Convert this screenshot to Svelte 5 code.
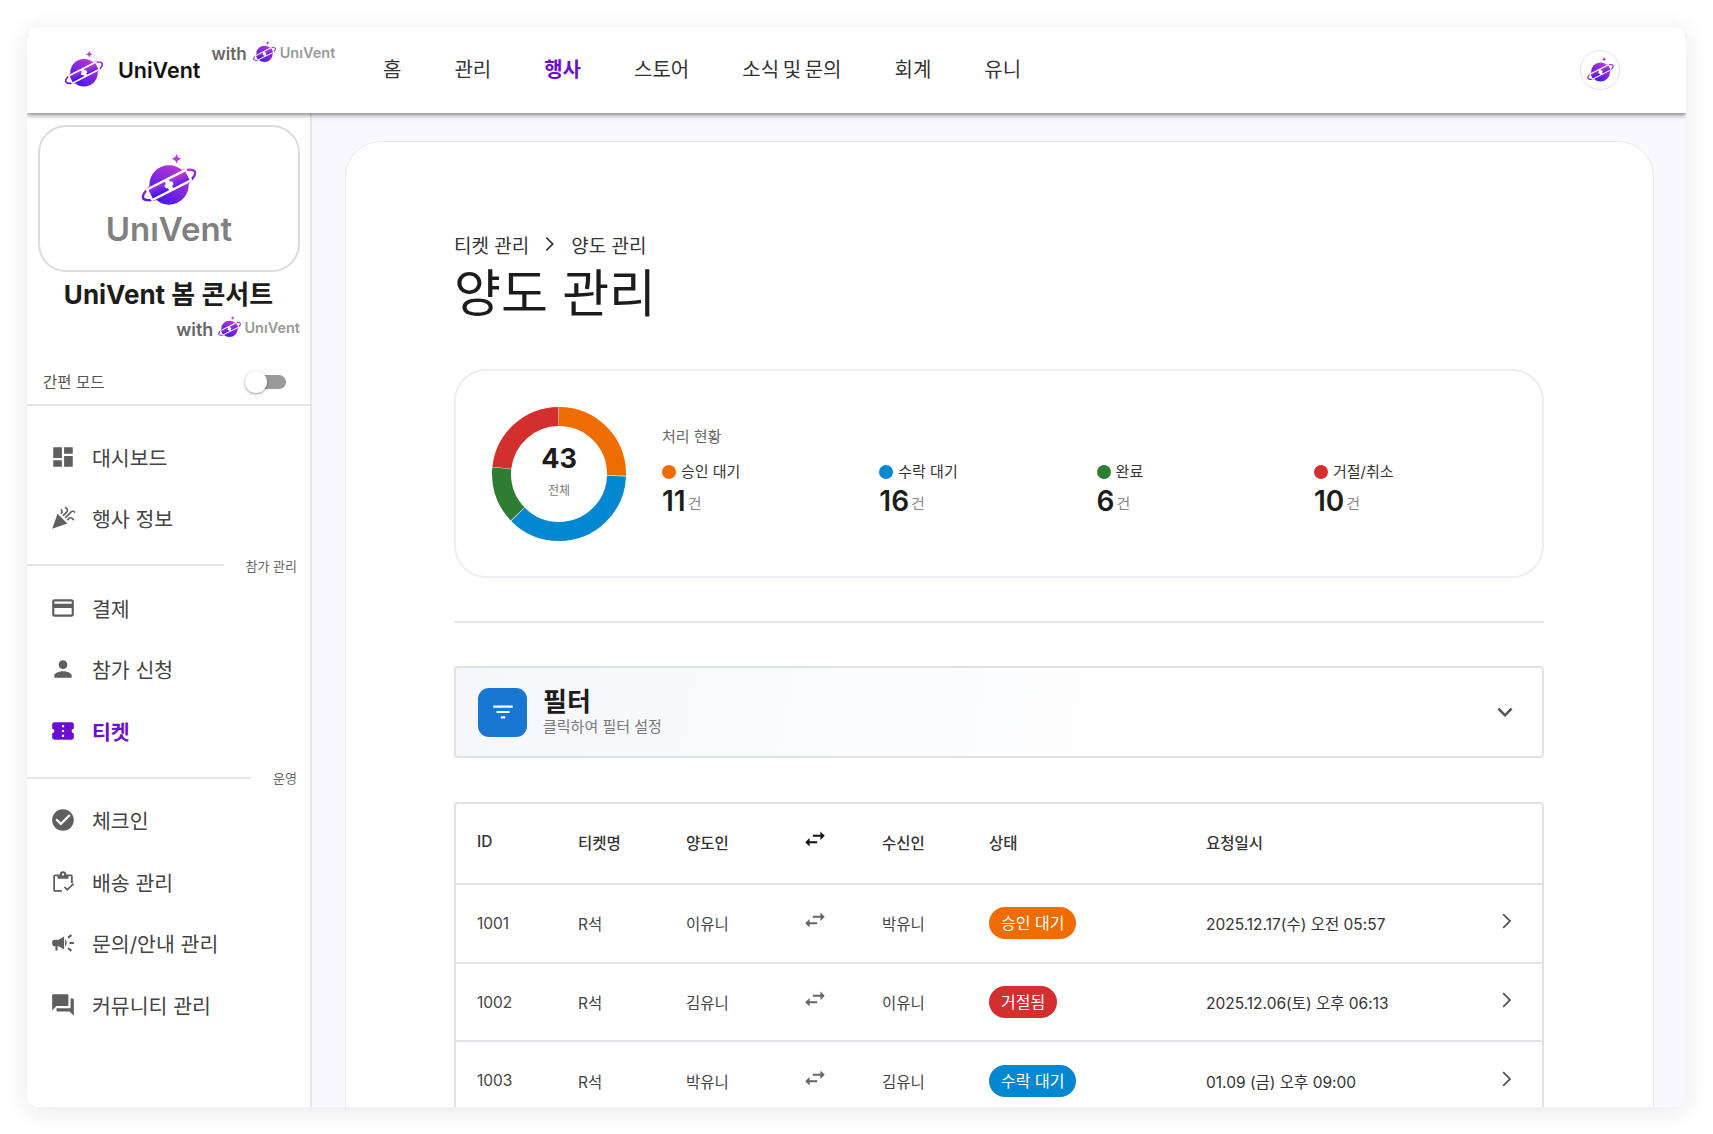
<script>
  const nav = ['홈', '관리', '행사', '스토어', '소식 및 문의', '회계', '유니'];

  const icons = {
    dashboard: 'M3 13h8V3H3v10zm0 8h8v-6H3v6zm10 0h8V11h-8v10zm0-18v6h8V3h-8z',
    celebration: 'M2 22l14-5-9-9zM14.53 12.53l5.59-5.59c.49-.49 1.28-.49 1.77 0l.59.59 1.06-1.06-.59-.59c-1.07-1.07-2.82-1.07-3.89 0l-5.59 5.59 1.06 1.06zM10.06 6.88l-.59.59 1.06 1.06.59-.59c1.07-1.07 1.07-2.82 0-3.89l-.59-.59-1.06 1.07.59.59c.48.48.48 1.28 0 1.76zM17.06 11.88l-1.59 1.59 1.06 1.06 1.59-1.59c.49-.49 1.28-.49 1.77 0l1.61 1.61 1.06-1.06-1.61-1.61c-1.08-1.07-2.82-1.07-3.89 0zM15.06 5.88l-3.59 3.59 1.06 1.06 3.59-3.59c1.07-1.07 1.07-2.82 0-3.89l-1.59-1.59-1.06 1.06 1.59 1.59c.48.49.48 1.29 0 1.77z',
    card: 'M20 4H4c-1.11 0-1.99.89-1.99 2L2 18c0 1.11.89 2 2 2h16c1.11 0 2-.89 2-2V6c0-1.11-.89-2-2-2zm0 14H4v-6h16v6zm0-10H4V6h16v2z',
    person: 'M12 12c2.21 0 4-1.79 4-4s-1.79-4-4-4-4 1.79-4 4 1.79 4 4 4zm0 2c-2.67 0-8 1.34-8 4v2h16v-2c0-2.66-5.33-4-8-4z',
    ticket: 'M22 10V6c0-1.11-.9-2-2-2H4c-1.1 0-1.99.89-1.99 2v4c1.1 0 1.99.9 1.99 2s-.89 2-2 2v4c0 1.1.9 2 2 2h16c1.1 0 2-.9 2-2v-4c-1.1 0-2-.9-2-2s.9-2 2-2zm-9 7.5h-2v-2h2v2zm0-4.5h-2v-2h2v2zm0-4.5h-2v-2h2v2z',
    check: 'M12 2C6.48 2 2 6.48 2 12s4.48 10 10 10 10-4.48 10-10S17.52 2 12 2zm-2 15l-5-5 1.41-1.41L10 14.17l7.59-7.59L19 8l-9 9z',
    delivery: 'M4.5 5H9a3 3 0 0 1 6 0h4.5c.8 0 1.5.7 1.5 1.5V13h-1.6V6.6H17V9H7V6.6H4.6v12.8H11V21H4.5c-.8 0-1.5-.7-1.5-1.5v-13C3 5.700 3.700 5 4.500 5zM12 3.900a1.100 1.100 0 1 0 0 2.200 1.100 1.100 0 0 0 0-2.200zM16 20.300l-3.300-3.300 1.100-1.100 2.200 2.200 5.200-5.200 1.100 1.100z',
    campaign: 'M18 11v2h4v-2h-4zm-2 6.61c.96.71 2.21 1.65 3.2 2.39.4-.53.8-1.07 1.2-1.6-.99-.74-2.24-1.68-3.2-2.4-.4.54-.8 1.08-1.2 1.61zM20.4 5.6c-.4-.53-.8-1.07-1.2-1.6-.99.74-2.24 1.68-3.2 2.4.4.53.8 1.07 1.2 1.6.96-.72 2.21-1.65 3.2-2.4zM4 9c-1.1 0-2 .9-2 2v2c0 1.1.9 2 2 2h1v4h2v-4h1l5 3V6L8 9H4zm11.5 3c0-1.33-.58-2.53-1.5-3.35v6.69c.92-.81 1.5-2.01 1.5-3.34z',
    forum: 'M21 6h-2v9H6v2c0 .55.45 1 1 1h11l4 4V7c0-.55-.45-1-1-1zm-4 6V3c0-.55-.45-1-1-1H3c-.55 0-1 .45-1 1v14l4-4h10c.55 0 1-.45 1-1z',
    swap: 'M6.99 11L3 15l3.99 4v-3H14v-2H6.99v-3zM21 9l-3.99-4v3H10v2h7.01v3L21 9z',
    filter: 'M10 18h4v-2h-4v2zM3 6v2h18V6H3zm3 7h12v-2H6v2z',
    down: 'M16.59 8.59L12 13.17 7.41 8.59 6 10l6 6 6-6z',
    right: 'M9.4 6l-1 1 5 5-5 5 1 1 6-6z'
  };

  const menu = [
    { items: [
      { label: '대시보드', icon: 'dashboard' },
      { label: '행사 정보', icon: 'celebration' }
    ] },
    { title: '참가 관리', items: [
      { label: '결제', icon: 'card' },
      { label: '참가 신청', icon: 'person' },
      { label: '티켓', icon: 'ticket', active: true }
    ] },
    { title: '운영', items: [
      { label: '체크인', icon: 'check' },
      { label: '배송 관리', icon: 'delivery' },
      { label: '문의/안내 관리', icon: 'campaign' },
      { label: '커뮤니티 관리', icon: 'forum' }
    ] }
  ];

  const stats = [
    { label: '승인 대기', value: 11, color: '#ef6c00' },
    { label: '수락 대기', value: 16, color: '#0288d1' },
    { label: '완료', value: 6, color: '#2e7d32' },
    { label: '거절/취소', value: 10, color: '#d32f2f' }
  ];
  const total = stats.reduce((sum, s) => sum + s.value, 0);
  const segments = stats.map((s, i) => ({
    ...s,
    offset: -stats.slice(0, i).reduce((sum, p) => sum + p.value, 0)
  }));

  const rows = [
    { id: 1001, ticket: 'R석', from: '이유니', to: '박유니', status: '승인 대기', tone: 'orange', date: '2025.12.17(수) 오전 05:57' },
    { id: 1002, ticket: 'R석', from: '김유니', to: '이유니', status: '거절됨', tone: 'red', date: '2025.12.06(토) 오후 06:13' },
    { id: 1003, ticket: 'R석', from: '박유니', to: '김유니', status: '수락 대기', tone: 'blue', date: '01.09 (금) 오후 09:00' }
  ];
</script>

{#snippet icon(name, size = 24)}
  <svg class="icon" width={size} height={size} viewBox="0 0 24 24" fill="currentColor"><path d={icons[name]} /></svg>
{/snippet}

{#snippet planet(width)}
  <svg class="planet" {width} viewBox="0 0 64 58">
    <defs>
      <linearGradient id="planet-fill" x1="0.85" y1="0" x2="0.25" y2="1">
        <stop offset="0" stop-color="#c03ad6" />
        <stop offset="1" stop-color="#4315e6" />
      </linearGradient>
    </defs>
    <path d="M40 0l1.600 3.400L45 5l-3.400 1.600L40 10l-1.600-3.400L35 5l3.400-1.600z" fill="#b93be0" />
    <ellipse cx="32" cy="33" rx="31" ry="9" transform="rotate(-27 32 33)" fill="none" stroke="url(#planet-fill)" stroke-width="2.600" />
    <circle cx="32" cy="33" r="21" fill="url(#planet-fill)" />
    <g transform="rotate(-27 32 33)">
      <rect x="7.500" y="25.500" width="49" height="15" rx="2" fill="#fff" />
      <path d="M10 28h19.500v2.500a2.500 2.500 0 0 0 0 5V38H10zM34.500 28H54v10H34.500v-2.500a2.500 2.500 0 0 0 0-5z" fill="url(#planet-fill)" />
    </g>
  </svg>
{/snippet}

{#snippet withBrand()}
  <span class="with">with</span>
  {@render planet(25)}
  <span class="with-name">UnıVent</span>
{/snippet}

<div class="window">
  <header class="topbar">
    <div class="brand">
      {@render planet(42)}
      <span class="brand-name">UniVent</span>
      <div class="brand-with">{@render withBrand()}</div>
    </div>
    <nav>
      {#each nav as item}
        <span class:current={item === '행사'}>{item}</span>
      {/each}
    </nav>
    <div class="avatar">{@render planet(29)}</div>
  </header>

  <div class="body">
    <aside>
      <div class="logo-box">
        {@render planet(60)}
        <span class="logo-name">UnıVent</span>
      </div>
      <div class="event-name">UniVent 봄 콘서트</div>
      <div class="event-with">{@render withBrand()}</div>
      <div class="simple-mode">
        <span>간편 모드</span>
        <div class="switch"><i></i></div>
      </div>
      <div class="menu">
        {#each menu as group}
          {#if group.title}
            <div class="group-title"><hr /><span>{group.title}</span></div>
          {/if}
          {#each group.items as item}
            <div class="menu-item" class:active={item.active}>
              {@render icon(item.icon, 26)}
              <span>{item.label}</span>
            </div>
          {/each}
        {/each}
      </div>
    </aside>

    <main>
      <section class="sheet">
        <div class="crumbs">
          <span>티켓 관리</span>
          {@render icon('right', 28)}
          <span>양도 관리</span>
        </div>
        <h1>양도 관리</h1>

        <div class="stat-card">
          <div class="donut">
            <svg width="136" height="136" viewBox="0 0 136 136">
              <g transform="rotate(-90 68 68)">
                {#each segments as s}
                  <circle cx="68" cy="68" r="57.5" fill="none" stroke={s.color} stroke-width="19"
                    pathLength={total} stroke-dasharray="{s.value - 0.06} {total - s.value + 0.06}" stroke-dashoffset={s.offset} />
                {/each}
              </g>
            </svg>
            <div class="donut-label">
              <strong>{total}</strong>
              <span>전체</span>
            </div>
          </div>
          <div class="legend">
            <div class="legend-title">처리 현황</div>
            <div class="legend-grid">
              {#each stats as s}
                <div>
                  <div class="legend-label"><i style="background: {s.color}"></i>{s.label}</div>
                  <div class="legend-value">{s.value}<small>건</small></div>
                </div>
              {/each}
            </div>
          </div>
        </div>

        <hr class="rule" />

        <div class="filter">
          <div class="filter-icon">{@render icon('filter', 26)}</div>
          <div class="filter-text">
            <strong>필터</strong>
            <span>클릭하여 필터 설정</span>
          </div>
          <div class="filter-toggle">{@render icon('down', 30)}</div>
        </div>

        <div class="table-wrap">
          <table>
            <thead>
              <tr>
                <th class="c-id">ID</th>
                <th class="c-ticket">티켓명</th>
                <th class="c-from">양도인</th>
                <th class="c-swap"><span class="swap head">{@render icon('swap', 26)}</span></th>
                <th class="c-to">수신인</th>
                <th class="c-status">상태</th>
                <th class="c-date">요청일시</th>
                <th></th>
              </tr>
            </thead>
            <tbody>
              {#each rows as row}
                <tr>
                  <td>{row.id}</td>
                  <td>{row.ticket}</td>
                  <td>{row.from}</td>
                  <td><span class="swap">{@render icon('swap', 26)}</span></td>
                  <td>{row.to}</td>
                  <td><span class="chip {row.tone}">{row.status}</span></td>
                  <td class="date">{row.date}</td>
                  <td class="more">{@render icon('right', 30)}</td>
                </tr>
              {/each}
            </tbody>
          </table>
        </div>
      </section>
    </main>
  </div>
</div>

<style>
  :global(body) {
    background: #fff;
    color: #222;
    font-family: Inter, "Noto Sans CJK KR", sans-serif;
  }

  .window {
    margin: 27px;
    height: 1080px;
    display: flex;
    flex-direction: column;
    overflow: hidden;
    background: #fff;
    border-radius: 12px;
    box-shadow: 0 4px 24px rgba(30, 30, 60, 0.1);
  }

  .icon, .planet {
    display: block;
    flex: none;
  }

  .topbar {
    position: relative;
    z-index: 2;
    flex: none;
    height: 86px;
    display: flex;
    align-items: center;
    padding: 0 66px 0 36px;
    background: #fff;
    box-shadow: 0 2px 5px rgba(0, 0, 0, 0.5);
  }

  .brand {
    display: flex;
    align-items: center;
    width: 320px;
    flex: none;
  }

  .brand-name {
    margin-left: 13px;
    font-size: 21.5px;
    font-weight: 600;
    color: #111;
  }

  .brand-with {
    display: flex;
    align-items: center;
    gap: 3px;
    margin: -36px 0 0 11px;
  }

  .with {
    font-size: 17px;
    font-weight: 600;
    color: #666;
    margin: 4px 2px 0 0;
  }

  .with-name {
    font-size: 14.5px;
    font-weight: 600;
    color: #999;
  }

  nav {
    display: flex;
    gap: 53px;
    margin-top: -3px;
    font-size: 20px;
    word-spacing: -2px;
    color: #333;
  }

  nav .current {
    color: #6a0fd0;
    font-weight: 700;
  }

  .avatar {
    width: 40px;
    height: 40px;
    margin-left: auto;
    display: flex;
    align-items: center;
    justify-content: center;
    border: 1px solid #e4e2ea;
    border-radius: 50%;
    box-sizing: border-box;
  }

  .body {
    flex: 1;
    min-height: 0;
    display: flex;
  }

  aside {
    flex: none;
    width: 283px;
    box-sizing: content-box;
    border-right: 2px solid #e6e6ec;
    background: #fff;
  }

  .logo-box {
    height: 147px;
    margin: 12px 10px 0 11px;
    padding-top: 6px;
    box-sizing: border-box;
    border: 2px solid #dcdcdc;
    border-radius: 28px;
    display: flex;
    flex-direction: column;
    align-items: center;
    justify-content: center;
    gap: 1px;
  }

  .logo-name {
    font-size: 33px;
    font-weight: 600;
    line-height: 40px;
    color: #808080;
  }

  .event-name {
    margin-top: 6px;
    text-align: center;
    font-size: 26px;
    font-weight: 700;
    line-height: 33px;
    color: #1c1c1c;
  }

  .event-with {
    display: flex;
    justify-content: flex-end;
    align-items: center;
    gap: 2px;
    height: 30px;
    margin-top: 1px;
    padding-right: 10px;
  }

  .event-with .with {
    font-size: 18px;
  }

  .simple-mode {
    display: flex;
    justify-content: space-between;
    align-items: center;
    height: 64px;
    padding: 18px 24px 0 16px;
    box-sizing: border-box;
    border-bottom: 2px solid #e6e6ea;
    font-size: 15.5px;
    color: #555;
  }

  .simple-mode span {
    margin-top: -2px;
  }

  .switch {
    position: relative;
    width: 33px;
    height: 14px;
    border-radius: 7px;
    background: #9a9a9a;
  }

  .switch i {
    position: absolute;
    left: -8px;
    top: -4px;
    width: 22px;
    height: 22px;
    border-radius: 50%;
    background: #fff;
    box-shadow: 0 1px 3px rgba(0, 0, 0, 0.4);
  }

  .menu {
    padding-top: 20px;
  }

  .menu-item {
    display: flex;
    align-items: center;
    gap: 16px;
    height: 61.5px;
    padding-left: 23px;
    font-size: 20.5px;
    color: #444;
  }

  .menu-item .icon {
    color: #5f5f5f;
  }

  .menu-item.active, .menu-item.active .icon {
    color: #6a0fd0;
    font-weight: 700;
  }

  .group-title {
    display: flex;
    align-items: center;
    gap: 22px;
    height: 28px;
    margin: 2px 0 -2px;
    padding-right: 13px;
    font-size: 13px;
    color: #666;
  }

  .group-title hr {
    flex: 1;
    margin: 0;
    border: 0;
    border-top: 2px solid #e6e6ea;
  }

  main {
    flex: 1;
    min-width: 0;
    overflow: hidden;
    padding: 28px 32px 0 33px;
    background: #f9f8fe;
  }

  .sheet {
    min-height: 1100px;
    box-sizing: border-box;
    padding: 88px 109px 0 108px;
    background: #fff;
    border: 1px solid #e8e8ee;
    border-radius: 36px;
  }

  .crumbs {
    display: flex;
    align-items: center;
    gap: 7px;
    height: 28px;
    font-size: 19px;
    color: #333;
  }

  h1 {
    margin: 2px 0 0;
    font-size: 51px;
    font-weight: 400;
    line-height: 68px;
    color: #1c1c1c;
  }

  .stat-card {
    display: flex;
    align-items: center;
    gap: 35px;
    height: 209px;
    margin-top: 41px;
    padding: 0 35px;
    box-sizing: border-box;
    border: 2px solid #eeeef2;
    border-radius: 32px;
  }

  .donut {
    position: relative;
    flex: none;
    width: 136px;
    height: 136px;
  }

  .donut svg {
    display: block;
  }

  .donut-label {
    position: absolute;
    inset: 0 0 6px;
    display: flex;
    flex-direction: column;
    align-items: center;
    justify-content: center;
    gap: 6px;
  }

  .donut-label strong {
    font-size: 27px;
    font-weight: 700;
    line-height: 32px;
    color: #1c1c1c;
  }

  .donut-label span {
    font-size: 12px;
    color: #777;
  }

  .legend {
    flex: 1;
  }

  .legend-title {
    font-size: 15px;
    color: #666;
    margin-bottom: 15px;
  }

  .legend-grid {
    display: grid;
    grid-template-columns: repeat(4, 217.3px);
  }

  .legend-label {
    display: flex;
    align-items: center;
    gap: 5px;
    font-size: 15px;
    line-height: 22px;
    color: #333;
  }

  .legend-label i {
    width: 14px;
    height: 14px;
    border-radius: 50%;
  }

  .legend-value {
    margin-top: 1px;
    font-size: 28px;
    font-weight: 600;
    line-height: 34px;
    color: #1c1c1c;
  }

  .legend-value small {
    margin-left: 2px;
    position: relative;
    top: -2px;
    font-size: 15px;
    font-weight: 400;
    color: #888;
  }

  .rule {
    margin: 43px 0 0;
    border: 0;
    border-top: 2px solid #e8e8ec;
  }

  .filter {
    display: flex;
    align-items: center;
    gap: 16px;
    height: 92px;
    margin-top: 43px;
    padding: 0 22px;
    box-sizing: border-box;
    border: 2px solid #e2e2e6;
    border-radius: 4px;
    background: linear-gradient(100deg, #f5f7fb, #fff 70%);
  }

  .filter-icon {
    width: 49px;
    height: 49px;
    display: flex;
    align-items: center;
    justify-content: center;
    border-radius: 11px;
    background: #1976d2;
    color: #fff;
  }

  .filter-text {
    display: flex;
    flex-direction: column;
  }

  .filter-text strong {
    font-size: 26px;
    font-weight: 700;
    line-height: 30px;
    color: #1c1c1c;
  }

  .filter-text span {
    font-size: 15px;
    line-height: 20px;
    color: #777;
  }

  .filter-toggle {
    margin-left: auto;
    color: #555;
  }

  .table-wrap {
    margin-top: 44px;
    border: 2px solid #e2e2e6;
    border-radius: 4px;
  }

  table {
    width: 100%;
    table-layout: fixed;
    border-collapse: collapse;
    font-size: 15.5px;
  }

  th, td {
    padding: 0 0 0 21px;
    box-sizing: border-box;
    text-align: left;
    border-bottom: 2px solid #e4e4e8;
  }

  th {
    height: 80px;
    padding-bottom: 4px;
    font-weight: 500;
    color: #333;
  }

  td {
    height: 78.7px;
    color: #444;
  }

  .c-id { width: 101px; }
  .c-ticket { width: 108px; }
  .c-from { width: 119px; }
  .c-swap { width: 77px; }
  .c-to { width: 107px; }
  .c-status { width: 217px; }
  .c-date { width: 280px; }

  td.date {
    color: #333;
  }

  .swap {
    display: block;
    margin: -6px 0 0 -3px;
    color: #666;
  }

  .swap.head {
    color: #111;
  }

  .chip {
    display: inline-block;
    height: 32px;
    padding: 0 12px;
    border-radius: 16px;
    font-size: 16px;
    line-height: 32px;
    color: #fff;
  }

  .chip.orange { background: #ef6c00; }
  .chip.red { background: #d32f2f; }
  .chip.blue { background: #0288d1; }

  .more {
    color: #555;
  }

  .more :global(svg) {
    margin: -4px 0 0 6px;
  }
</style>
